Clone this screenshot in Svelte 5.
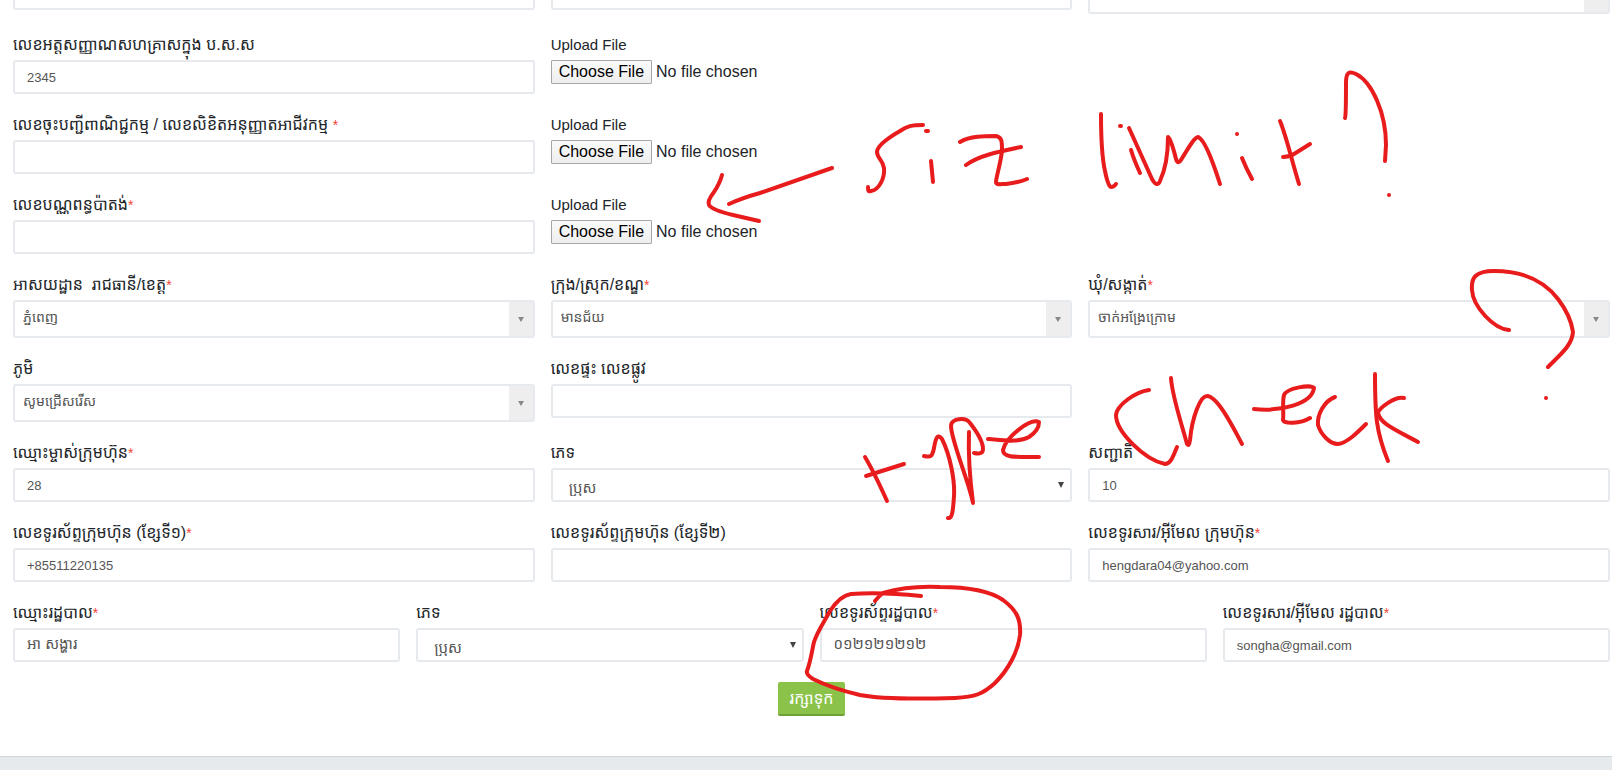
<script lang="ts">
  type Field = {
    id: string;
    label: string;
    kind?: 'text' | 'select' | 'native' | 'file';
    value?: string;
    required?: boolean;
    khmer?: boolean;
  };

  const uploads: Field[][] = [
    [
      { id: 'nssf', label: 'លេខអត្តសញ្ញាណសហគ្រាសក្នុង ប.ស.ស', value: '2345' },
      { id: 'nssf-file', label: 'Upload File', kind: 'file' }
    ],
    [
      { id: 'licence', label: 'លេខចុះបញ្ជីពាណិជ្ជកម្ម / លេខលិខិតអនុញ្ញាតអាជីវកម្ម ', required: true },
      { id: 'licence-file', label: 'Upload File', kind: 'file' }
    ],
    [
      { id: 'patent', label: 'លេខបណ្ណពន្ធប៉ាតង់', required: true },
      { id: 'patent-file', label: 'Upload File', kind: 'file' }
    ]
  ];

  const details: Field[][] = [
    [
      { id: 'province', label: 'អាសយដ្ឋាន  រាជធានី/ខេត្ត', kind: 'select', value: 'ភ្នំពេញ', required: true },
      { id: 'district', label: 'ក្រុង/ស្រុក/ខណ្ឌ', kind: 'select', value: 'មានជ័យ', required: true },
      { id: 'commune', label: 'ឃុំ/សង្កាត់', kind: 'select', value: 'ចាក់អង្រែក្រោម', required: true }
    ],
    [
      { id: 'village', label: 'ភូមិ', kind: 'select', value: 'សូមជ្រើសរើស' },
      { id: 'house', label: 'លេខផ្ទះ លេខផ្លូវ' }
    ],
    [
      { id: 'owner', label: 'ឈ្មោះម្ចាស់ក្រុមហ៊ុន', value: '28', required: true },
      { id: 'owner-sex', label: 'ភេទ', kind: 'native', value: 'ប្រុស' },
      { id: 'nationality', label: 'សញ្ជាតិ', value: '10' }
    ],
    [
      { id: 'phone1', label: 'លេខទូរស័ព្ទក្រុមហ៊ុន (ខ្សែទី១)', value: '+85511220135', required: true },
      { id: 'phone2', label: 'លេខទូរស័ព្ទក្រុមហ៊ុន (ខ្សែទី២)' },
      { id: 'email', label: 'លេខទូរសារ/អ៊ីមែល ក្រុមហ៊ុន', value: 'hengdara04@yahoo.com', required: true }
    ]
  ];

  const admin: Field[] = [
    { id: 'admin', label: 'ឈ្មោះរដ្ឋបាល', value: 'អា សង្ហារ', required: true, khmer: true },
    { id: 'admin-sex', label: 'ភេទ', kind: 'native', value: 'ប្រុស' },
    { id: 'admin-phone', label: 'លេខទូរស័ព្ទរដ្ឋបាល', value: '០១២១២១២១២', required: true, khmer: true },
    { id: 'admin-email', label: 'លេខទូរសារ/អ៊ីមែល រដ្ឋបាល', value: 'songha@gmail.com', required: true }
  ];

  // red pen strokes, drawn over the form
  const strokes = [
    // arrow
    'M832 168 L760 193 Q742 198 729 204',
    'M722 175 Q720 183 714 192 Q707 201 709 205 Q712 210 733 215 L759 221',
    // siz
    'M923 125 C912 125 907 126 900 131 C888 138 877 146 877 152 C877 158 883 160 884 168 C885 178 879 190 871 191 C868 192 868 190 868 187',
    'M926 131 L928 131',
    'M931 161 L933 182',
    'M960 142 C970 136 985 136 996 136 C1002 137 1002 142 1002 150 C1001 163 996 177 996 182 C996 185 1000 184 1006 184 C1014 183 1020 182 1027 179',
    'M966 165 C978 156 997 152 1021 147',
    // limit ?
    'M1101 114 C1101 140 1102 158 1105 171 C1107 181 1109 187 1111 187 Q1114 187 1116 184',
    'M1120 126 L1121 126',
    'M1131 150 Q1134 160 1140 173',
    'M1129 128 L1152 179 Q1157 188 1160 181 C1166 168 1168 152 1168 137 Q1171 139 1176 159 Q1178 165 1181 160 C1190 145 1195 137 1198 137 C1204 139 1213 162 1220 184',
    'M1237 134 L1237 134',
    'M1242 158 Q1246 168 1252 179',
    'M1280 121 C1287 138 1292 162 1299 184',
    'M1283 157 Q1289 157 1294 154 L1310 144',
    'M1345 118 Q1346 116 1346 83 C1346 72 1349 71 1356 74 C1372 82 1386 113 1386 145 L1385 161',
    'M1389 195 L1389 195',
    // type
    'M865 457 Q874 472 887 501',
    'M866 476 L904 464',
    'M924 456 C930 457 932 458 934 448 C936 436 938 434 942 439 C950 455 955 480 954 496 C953 512 952 519 948 518',
    'M969 432 C968 458 970 480 973 503 C969 482 951 440 951 426 C951 418 966 417 970 423 C977 432 983 443 983 449 Q983 455 974 453',
    'M988 439 C1010 441 1020 442 1029 437 C1035 433 1039 427 1039 422 C1030 418 1006 437 1003 450 C1003 458 1015 457 1039 457',
    // check ?
    'M1149 390 C1135 392 1117 405 1116 415 C1116 432 1145 460 1165 464 C1171 464 1173 456 1177 447',
    'M1171 378 C1172 396 1182 425 1187 444 Q1189 447 1190 440 C1192 418 1200 396 1207 396 C1217 396 1232 425 1242 444',
    'M1254 409 C1280 412 1312 404 1314 388 C1311 384 1287 388 1284 395 C1282 403 1284 415 1283 420 C1284 424 1300 424 1310 418',
    'M1335 397 C1324 401 1317 415 1318 425 C1321 435 1330 444 1338 444 C1347 443 1357 433 1366 424',
    'M1375 374 C1375 415 1376 432 1388 461',
    'M1404 398 C1395 396 1379 408 1378 413 C1380 423 1392 428 1418 442',
    'M1509 330 C1494 329 1473 307 1472 290 C1471 278 1475 271 1494 271 C1525 271 1545 282 1558 299 C1568 312 1572 325 1573 332 C1572 345 1562 353 1548 367',
    'M1546 398 L1546 398',
    // circle
    'M875 601 Q879 596 883 593 C900 588 920 586 940 587 C967 587 990 591 1003 600 C1018 611 1021 621 1020 635 C1018 652 1008 670 995 683 C983 694 975 697 955 698 C920 699 880 699 860 695 C843 691 825 685 813 679 C808 676 806 674 807 671 C811 660 812 650 814 642 C817 632 824 622 830 611 C836 602 843 595 851 594 Q882 592 921 596'
  ];
</script>

{#snippet field(f: Field)}
  <div class="field">
    <label for={f.id} class:latin={f.kind === 'file'}>{f.label}{#if f.required}<span class="star">*</span>{/if}</label>
    {#if f.kind === 'file'}
      <input id={f.id} type="file" />
    {:else if f.kind === 'select'}
      <div class="picker">
        <select id={f.id} class="control tall">
          <option>{f.value}</option>
        </select>
        {@render arrow()}
      </div>
    {:else if f.kind === 'native'}
      <div class="picker">
        <select id={f.id} class="control native">
          <option>{f.value}</option>
        </select>
        <svg class="caret" viewBox="0 0 6 6" aria-hidden="true"><path d="M0 0h6L3 6z" /></svg>
      </div>
    {:else}
      <input id={f.id} class="control" class:khmer={f.khmer} type="text" value={f.value ?? ''} />
    {/if}
  </div>
{/snippet}

{#snippet arrow()}
  <span class="arrow">
    <svg viewBox="0 0 6 5" aria-hidden="true"><path d="M0 0h6L3 5z" /></svg>
  </span>
{/snippet}

<div class="page">
  <form>
    <div class="row top">
      <input class="control" type="text" aria-label="Company name (Khmer)" />
      <input class="control" type="text" aria-label="Company name (Latin)" />
      <div class="picker">
        <select class="control tall" aria-label="Business activity"></select>
        {@render arrow()}
      </div>
    </div>
    {#each [...uploads, ...details] as row}
      <div class="row">
        {#each row as f (f.id)}
          {@render field(f)}
        {/each}
      </div>
    {/each}
    <div class="row four">
      {#each admin as f (f.id)}
        {@render field(f)}
      {/each}
    </div>
    <div class="actions">
      <button type="button">រក្សាទុក</button>
    </div>
  </form>
  <footer></footer>

  <svg class="pen" viewBox="0 0 1612 770" aria-hidden="true">
    {#each strokes as d}
      <path {d} />
    {/each}
  </svg>
</div>

<style>
  :global(body) {
    background: #fff;
  }

  .page {
    position: relative;
    overflow: hidden;
    font-family: "Liberation Sans", "Noto Sans Khmer", "Khmer OS", Arial, sans-serif;
    font-size: 16px;
    color: #212529;
  }

  form {
    padding: 0 2px 40px 13px;
  }

  .row {
    display: grid;
    grid-template-columns: repeat(3, minmax(0, 1fr));
    align-items: start;
    column-gap: 16px;
    margin-bottom: 20px;
  }

  .row.four {
    grid-template-columns: repeat(4, minmax(0, 1fr));
  }

  /* the first row is scrolled partly out of view */
  .row.top {
    margin-top: -24px;
  }

  label {
    display: block;
    height: 26px;
    line-height: 22px;
    white-space: pre;
  }

  label.latin {
    font-size: 15px;
  }

  .star {
    font-size: 14px;
    color: #f44336;
  }

  .control {
    display: block;
    box-sizing: border-box;
    width: 100%;
    height: 34px;
    margin: 0;
    padding: 0 12px;
    border: 2px solid #e6eaee;
    border-radius: 3px;
    background: #fff;
    color: #555;
    font-family: inherit;
    font-size: 13px;
    outline: none;
    appearance: none;
  }

  .control.khmer {
    padding-bottom: 4px;
    font-size: 15px;
  }

  .control.tall {
    height: 38px;
    padding: 0 32px 4px 8px;
    font-size: 14px;
  }

  .control.native {
    padding: 4px 24px 0 16px;
    font-size: 15px;
  }

  .picker {
    position: relative;
  }

  .arrow {
    position: absolute;
    top: 2px;
    right: 2px;
    bottom: 2px;
    display: flex;
    align-items: center;
    justify-content: center;
    width: 24px;
    background: #eee;
    pointer-events: none;
  }

  .arrow svg {
    width: 6px;
    height: 5px;
    fill: #888;
  }

  .caret {
    position: absolute;
    top: 14px;
    right: 8px;
    width: 6px;
    height: 6px;
    fill: #444;
    pointer-events: none;
  }

  input[type='file'] {
    display: block;
    width: 100%;
    height: 24px;
    font-family: inherit;
    font-size: 16px;
    color: #212529;
  }

  input[type='file']::file-selector-button {
    box-sizing: border-box;
    height: 24px;
    margin: 0 4px 0 0;
    padding: 0 7px;
    border: 1px solid #a6a6a6;
    border-radius: 1px;
    background: linear-gradient(#fafafa, #eee);
    font-family: inherit;
    font-size: 16px;
    color: #000;
  }

  .actions {
    display: flex;
    justify-content: center;
  }

  button {
    height: 34px;
    padding: 0 12px;
    border: 0;
    border-bottom: 2px solid #6fa136;
    border-radius: 2px;
    background: #8bc34a;
    color: #fff;
    font-family: inherit;
    font-size: 16px;
  }

  footer {
    height: 13px;
    border-top: 1px solid #cfd6da;
    background: #e6eaed;
  }

  .pen {
    position: absolute;
    top: 0;
    left: 0;
    width: 100%;
    fill: none;
    stroke: #e81c1c;
    stroke-width: 4;
    stroke-linecap: round;
    stroke-linejoin: round;
    pointer-events: none;
  }
</style>
